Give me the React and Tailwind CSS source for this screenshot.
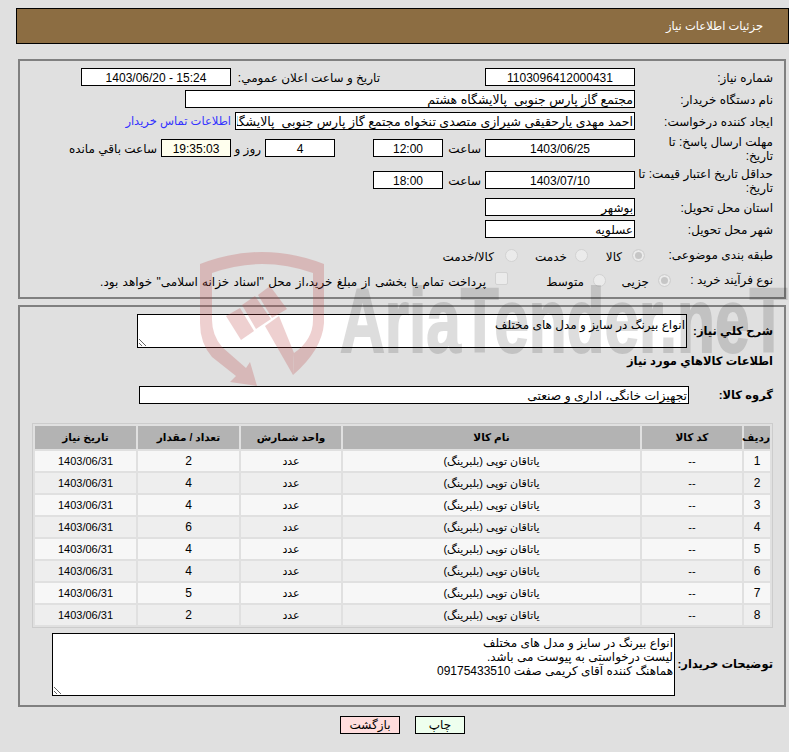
import React from "react";

const font = "font-['Liberation_Sans','DejaVu_Sans',sans-serif]";
const field = "h-[18px] shrink-0 border border-black bg-white px-[1px] pt-[1px] text-black outline-none " + font;

function Field({ w, value, center, extra }) {
  return (
    <input
      readOnly
      value={value}
      className={field + " " + w + " " + (center ? "text-center" : "text-right") + " " + (extra || "text-[12px]")}
    />
  );
}

const items = [
  ["1", "2"], ["2", "4"], ["3", "4"], ["4", "6"],
  ["5", "4"], ["6", "4"], ["7", "5"], ["8", "2"],
];

function Radio({ checked }) {
  return (
    <input
      type="radio"
      disabled
      defaultChecked={checked}
      className="size-[13px] shrink-0 appearance-none rounded-full border border-[#d2d2d2] bg-[#ebebeb] checked:bg-[#c6c6c6] checked:shadow-[inset_0_0_0_2px_#ebebeb]"
    />
  );
}

export default function App() {
  return (
    <div dir="rtl" className={"relative h-[752px] overflow-hidden bg-[#e0e0e0] pt-2 text-[12px] leading-[15px] text-black " + font}>
      <div className="ml-4 mr-0 flex h-9 items-center border border-black bg-[#8c6d42] pr-[25px] text-[11.5px] text-white">
        جزئیات اطلاعات نیاز
      </div>

      <div className="ml-[18px] mr-[3px] mt-[15px] h-[240px] border-2 border-[#808080] pr-[11px] pt-[7px]">
        <div className="flex h-[18px] items-center">
          <div className="w-[138px] shrink-0 pt-[3px]">شماره نیاز:</div>
          <Field w="w-[150px]" value="1103096412000431" center />
          <div className="mr-[105px] w-[149px] shrink-0 pt-[3px]">تاریخ و ساعت اعلان عمومي:</div>
          <Field w="w-[150px]" value="15:24 - 1403/06/20" center />
        </div>
        <div className="mt-1 flex h-[18px] items-center">
          <div className="w-[138px] shrink-0 pt-[3px]">نام دستگاه خریدار:</div>
          <Field w="w-[450px]" value="مجتمع گاز پارس جنوبی  پالایشگاه هشتم" extra="text-[12.5px]" />
        </div>
        <div className="mt-1 flex h-[18px] items-center">
          <div className="w-[138px] shrink-0 pt-[3px]">ایجاد کننده درخواست:</div>
          <Field w="w-[400px]" value="احمد مهدی یارحقیقی شیرازی متصدی تنخواه مجتمع گاز پارس جنوبی  پالایشگاه هشتم" extra="text-[12.5px]" />
          <a className="mr-1 pt-[1px] text-[11.5px] text-[#3333ff]">اطلاعات تماس خریدار</a>
        </div>
        <div className="mt-[9px] flex h-[18px] items-center">
          <div className="w-[138px] shrink-0 whitespace-nowrap pt-[1px] leading-[14px]">مهلت ارسال پاسخ: تا<br />تاریخ:</div>
          <Field w="w-[150px]" value="1403/06/25" center />
          <div className="w-[42px] shrink-0 pr-1 pt-[2px]">ساعت</div>
          <Field w="w-[70px]" value="12:00" center />
          <div className="w-[38px] shrink-0" />
          <Field w="w-[70px]" value="4" center />
          <div className="w-[34px] shrink-0 pr-1 pt-[2px]">روز و</div>
          <Field w="w-[70px]" value="19:35:03" center extra="text-[12px] !bg-[#ffffee]" />
          <div className="pr-1 pt-[2px]">ساعت باقي مانده</div>
        </div>
        <div className="mt-[14px] flex h-[18px] items-center">
          <div className="w-[138px] shrink-0 whitespace-nowrap pt-[1px] leading-[14px]">حداقل تاریخ اعتبار قیمت: تا<br />تاریخ:</div>
          <Field w="w-[150px]" value="1403/07/10" center />
          <div className="w-[42px] shrink-0 pr-1 pt-[2px]">ساعت</div>
          <Field w="w-[70px]" value="18:00" center />
        </div>
        <div className="mt-[9px] flex h-[18px] items-center">
          <div className="w-[138px] shrink-0 pt-[2px]">استان محل تحویل:</div>
          <Field w="w-[150px]" value="بوشهر" />
        </div>
        <div className="mt-1 flex h-[18px] items-center">
          <div className="w-[138px] shrink-0 pt-[2px]">شهر محل تحویل:</div>
          <Field w="w-[150px]" value="عسلویه" />
        </div>
        <div className="mt-[8px] flex h-[18px] items-center">
          <div className="w-[128px] shrink-0">طبقه بندی موضوعی:</div>
          <Radio checked />
          <div className="mt-1 w-[44px] shrink-0 pr-[10px]">کالا</div>
          <Radio />
          <div className="mt-1 w-[57px] shrink-0 pr-2">خدمت</div>
          <Radio />
          <div className="mt-1 pr-[11px]">کالا/خدمت</div>
        </div>
        <div className="mt-[7px] flex h-[18px] items-center">
          <div className="w-[102px] shrink-0">نوع فرآیند خرید :</div>
          <Radio checked />
          <div className="mt-1 w-[52px] shrink-0 pr-[9px]">جزیی</div>
          <Radio />
          <div className="mt-1 w-[85px] shrink-0 pr-[9px]">متوسط</div>
          <input type="checkbox" disabled className="-mt-1 size-[13px] shrink-0 appearance-none rounded-[2px] border border-[#d2d2d2] bg-[#ebebeb]" />
          <div className="mt-1 whitespace-nowrap pr-[9px] [word-spacing:1px]">پرداخت تمام یا بخشی از مبلغ خرید،از محل "اسناد خزانه اسلامی" خواهد بود.</div>
        </div>
      </div>

      <div className="ml-[18px] mr-[3px] mt-[6px] h-[402px] border-2 border-[#808080] pr-[11px] pt-[7px] text-[11.5px]">
        <div className="flex items-center">
          <div className="w-[86px] shrink-0 whitespace-nowrap font-bold">شرح کلي نیاز:</div>
          <textarea
            readOnly
            value="انواع بیرنگ در سایز و مدل های مختلف"
            className="h-[34px] w-[550px] shrink-0 border border-black bg-white px-[1px] pt-[3px] text-[12px] leading-[15px] outline-none"
          />
        </div>
        <div className="mt-[6px] h-4 font-bold">اطلاعات کالاهاي مورد نیاز</div>
        <div className="mt-4 flex h-[18px] items-center">
          <div className="w-[84px] shrink-0 font-bold">گروه کالا:</div>
          <Field w="w-[550px]" value="تجهیزات خانگی، اداری و صنعتی" extra="text-[12.3px]" />
        </div>
        <table className="mt-[19px] w-[741px] table-fixed border-separate border-spacing-[2px] border border-[#cccccc] text-center text-[11px]">
          <colgroup>
            <col className="w-[26px]" />
            <col className="w-[100px]" />
            <col className="w-[297px]" />
            <col className="w-[100px]" />
            <col className="w-[101px]" />
            <col className="w-[101px]" />
          </colgroup>
          <thead>
            <tr className="h-[23px] bg-[#b3b3b3] text-[10.5px] font-bold">
              <th className="p-0">ردیف</th>
              <th className="p-0">کد کالا</th>
              <th className="p-0">نام کالا</th>
              <th className="p-0">واحد شمارش</th>
              <th className="p-0">تعداد / مقدار</th>
              <th className="p-0">تاریخ نیاز</th>
            </tr>
          </thead>
          <tbody>
            {items.map(([n, q], i) => (
              <tr key={n} className={"h-5 " + (i % 2 ? "bg-[#eeeeee]" : "bg-[#f7f7f7]")}>
                <td className="p-0 text-[12px]">{n}</td>
                <td className="p-0">--</td>
                <td className="p-0">یاتاقان توپی (بلبرینگ)</td>
                <td className="p-0">عدد</td>
                <td className="p-0 text-[12px]">{q}</td>
                <td className="p-0">1403/06/31</td>
              </tr>
            ))}
          </tbody>
        </table>
        <div className="mt-[5px] flex items-center">
          <div className="w-[98px] shrink-0 whitespace-nowrap font-bold">توضیحات خریدار:</div>
          <textarea
            readOnly
            value={"انواع بیرنگ در سایز و مدل های مختلف\nلیست درخواستی به پیوست می باشد.\nهماهنگ کننده آقای کریمی صفت 09175433510"}
            className="h-[63px] w-[623px] shrink-0 border border-black bg-white px-[1px] pt-[2px] text-[12px] leading-[14px] outline-none"
          />
        </div>
      </div>

      <div className="mr-[324px] mt-[9px] flex">
        <button className="h-[18px] w-[50px] border border-black bg-[#eeffee] text-[12px]">چاپ</button>
        <button className="mr-[15px] h-[18px] w-[60px] border border-black bg-[#ffdddd] text-[12px]">بازگشت</button>
      </div>

      <div className="pointer-events-none absolute inset-0 h-[386px] overflow-hidden">
        <svg className="absolute left-0 top-0 size-[789px] opacity-25" viewBox="0 0 789 789" fill="#be4646">
          <path d="M200 264Q262 240 324 264L324 323Q322 350 293 375L294 353Q313 340 313 320L313 273Q262 255 212 273L212 320Q212 335 222 347L246 368L250 362L257 386L230 382L236 376L212 357Q200 343 200 323Z" />
          <path d="M226 316L240 308L254 331L241 340Z" />
          <path d="M242 305L255 296L271 319L256 329Z" />
          <path d="M258 295L270 286L287 309L272 318Z" />
          <path d="M265 326L279 316L294 353L293 375Z" />
        </svg>
        <div dir="ltr" className="absolute left-[340px] top-[276px] origin-left scale-x-[0.69] whitespace-nowrap font-['Liberation_Sans',sans-serif] text-[90px] font-bold leading-none text-black opacity-[0.13] [-webkit-text-stroke:2px_black]">
          AriaTender.neT
        </div>
      </div>
    </div>
  );
}
